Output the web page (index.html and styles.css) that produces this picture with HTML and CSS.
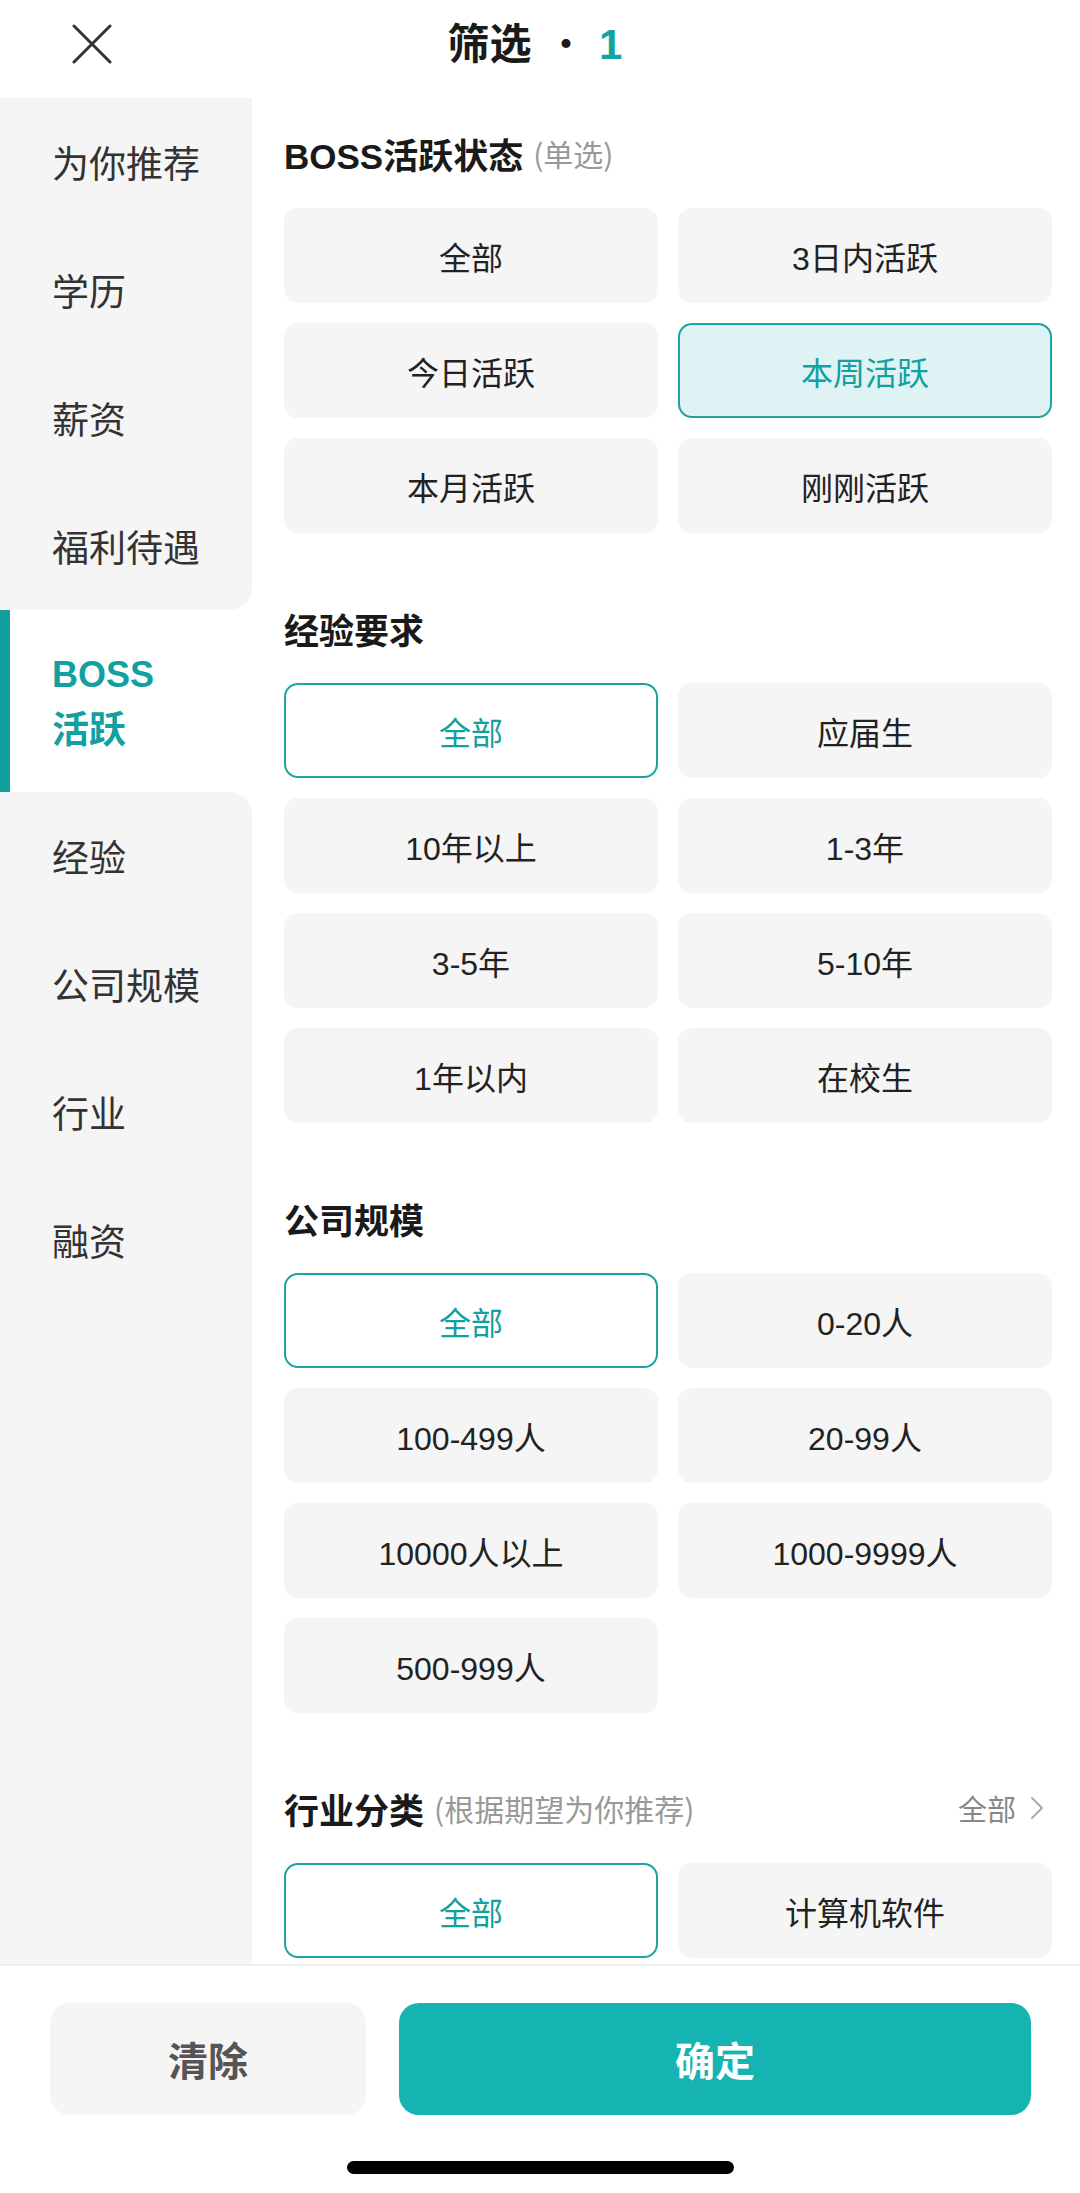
FILE: index.html
```html
<!DOCTYPE html>
<html lang="zh">
<head>
<meta charset="utf-8">
<title>筛选</title>
<link rel="stylesheet" href="styles.css">
</head>
<body>
<div class="page">
  <header class="header">
    <div class="close">
      <svg width="40" height="40" viewBox="0 0 40 40"><path d="M2 2 L38 38 M38 2 L2 38" stroke="#333" stroke-width="3" stroke-linecap="round" fill="none"/></svg>
    </div>
    <div class="title">筛选 <span class="dot">·</span><span class="count">1</span></div>
  </header>

  <main class="main">
    <nav class="sidebar">
      <div class="nav-item">为你推荐</div>
      <div class="nav-item">学历</div>
      <div class="nav-item">薪资</div>
      <div class="nav-item before-active">福利待遇</div>
      <div class="nav-item active"><span>BOSS</span><span>活跃</span></div>
      <div class="nav-item after-active">经验</div>
      <div class="nav-item">公司规模</div>
      <div class="nav-item">行业</div>
      <div class="nav-item">融资</div>
      <div class="nav-fill"></div>
    </nav>

    <section class="content">
      <div class="group">
        <div class="group-title"><span class="name">BOSS活跃状态</span><span class="hint">(单选)</span></div>
        <div class="grid">
          <div class="opt">全部</div>
          <div class="opt">3日内活跃</div>
          <div class="opt">今日活跃</div>
          <div class="opt selected">本周活跃</div>
          <div class="opt">本月活跃</div>
          <div class="opt">刚刚活跃</div>
        </div>
      </div>

      <div class="group">
        <div class="group-title"><span class="name">经验要求</span></div>
        <div class="grid">
          <div class="opt outlined">全部</div>
          <div class="opt">应届生</div>
          <div class="opt">10年以上</div>
          <div class="opt">1-3年</div>
          <div class="opt">3-5年</div>
          <div class="opt">5-10年</div>
          <div class="opt">1年以内</div>
          <div class="opt">在校生</div>
        </div>
      </div>

      <div class="group">
        <div class="group-title"><span class="name">公司规模</span></div>
        <div class="grid">
          <div class="opt outlined">全部</div>
          <div class="opt">0-20人</div>
          <div class="opt">100-499人</div>
          <div class="opt">20-99人</div>
          <div class="opt">10000人以上</div>
          <div class="opt">1000-9999人</div>
          <div class="opt">500-999人</div>
        </div>
      </div>

      <div class="group">
        <div class="group-title">
          <span class="name">行业分类</span><span class="hint">(根据期望为你推荐)</span>
          <span class="more">全部<svg width="14" height="24" viewBox="0 0 14 24"><path d="M2 2 L12 12 L2 22" stroke="#aaa" stroke-width="2" fill="none" stroke-linecap="round" stroke-linejoin="round"/></svg></span>
        </div>
        <div class="grid">
          <div class="opt outlined">全部</div>
          <div class="opt">计算机软件</div>
        </div>
      </div>
    </section>
  </main>

  <footer class="footer">
    <div class="actions">
      <button class="btn btn-clear">清除</button>
      <button class="btn btn-ok">确定</button>
    </div>
    <div class="home-bar"></div>
  </footer>
</div>
</body>
</html>
```

FILE: styles.css
```css
* { box-sizing: border-box; }
html, body {
  margin: 0;
  padding: 0;
  background: #fff;
}
body {
  font-family: "Liberation Sans", "Noto Sans CJK SC", sans-serif;
  color: #222;
}
.page {
  width: 1080px;
  height: 2193px;
  display: flex;
  flex-direction: column;
  overflow: hidden;
}

/* header */
.header {
  height: 98px;
  flex: none;
  display: flex;
  align-items: center;
  justify-content: center;
  position: relative;
}
.close {
  position: absolute;
  left: 72px;
  top: 24px;
  width: 40px;
  height: 40px;
}
.close svg { display: block; }
.title {
  font-family: "Noto Sans CJK SC", sans-serif;
  font-size: 42px;
  font-weight: 700;
  color: #1a1a1a;
  margin-top: -18px;
  margin-left: -10px;
}
.title .dot { font-weight: 400; margin: 0 12px 0 4px; }
.title .count {
  font-family: "Liberation Sans", sans-serif;
  font-weight: 700;
  color: #13a3a3;
}

/* main */
.main {
  flex: 1;
  display: flex;
  min-height: 0;
  overflow: hidden;
}
.sidebar {
  width: 252px;
  flex: none;
  display: flex;
  flex-direction: column;
  background: #fff;
}
.nav-item {
  height: 128px;
  flex: none;
  display: flex;
  align-items: center;
  padding-left: 52px;
  background: #f5f5f5;
  font-family: "Noto Sans CJK SC", sans-serif;
  font-size: 37px;
  color: #333;
}
.nav-item.before-active { border-bottom-right-radius: 22px; }
.nav-item.after-active { border-top-right-radius: 22px; }
.nav-item.active {
  height: 182px;
  background: #fff;
  flex-direction: column;
  align-items: flex-start;
  justify-content: center;
  border-left: 10px solid #139e9e;
  padding-left: 42px;
  color: #13a0a0;
  font-weight: 700;
  line-height: 53px;
}
.nav-item.active span:first-child {
  font-family: "Liberation Sans", sans-serif;
  font-size: 36px;
}
.nav-fill {
  flex: 1;
  background: #f5f5f5;
}

/* content */
.content {
  flex: 1;
  padding: 30px 28px 0 32px;
  overflow: hidden;
}
.group { margin-bottom: 70px; }
.group-title {
  height: 50px;
  display: flex;
  align-items: center;
  margin-bottom: 30px;
}
.group-title .name {
  font-family: "Liberation Sans", "Noto Sans CJK SC", sans-serif;
  font-size: 35px;
  font-weight: 700;
  color: #1a1a1a;
}
.group-title .hint {
  font-family: "Noto Sans CJK SC", sans-serif;
  font-size: 30px;
  color: #999;
  margin-left: 10px;
}
.group-title .more {
  margin-left: auto;
  display: flex;
  align-items: center;
  gap: 14px;
  font-family: "Noto Sans CJK SC", sans-serif;
  font-size: 29px;
  color: #888;
  margin-right: 8px;
}
.grid {
  display: grid;
  grid-template-columns: 1fr 1fr;
  gap: 20px;
}
.opt {
  height: 95px;
  border-radius: 14px;
  background: #f5f5f5;
  display: flex;
  align-items: center;
  justify-content: center;
  font-size: 32px;
  color: #222;
  border: 2px solid transparent;
}
.opt.selected {
  background: #dff3f4;
  border-color: #1ea3a3;
  color: #13a0a0;
}
.opt.outlined {
  background: #fff;
  border-color: #1ea3a3;
  color: #13a0a0;
}

/* footer */
.footer {
  height: 229px;
  flex: none;
  border-top: 2px solid #efefef;
  background: #fff;
  display: flex;
  flex-direction: column;
  align-items: center;
}
.actions {
  width: 100%;
  display: flex;
  gap: 33px;
  padding: 37px 49px 0 50px;
}
.btn {
  height: 112px;
  border: none;
  border-radius: 20px;
  font-family: "Noto Sans CJK SC", sans-serif;
  font-size: 40px;
  font-weight: 700;
  display: flex;
  align-items: center;
  justify-content: center;
}
.btn-clear {
  width: 316px;
  background: #f5f5f5;
  color: #555;
}
.btn-ok {
  flex: 1;
  background: #16b3b3;
  color: #fff;
}
.home-bar {
  margin-top: 46px;
  width: 387px;
  height: 13px;
  border-radius: 7px;
  background: #000;
}
```
